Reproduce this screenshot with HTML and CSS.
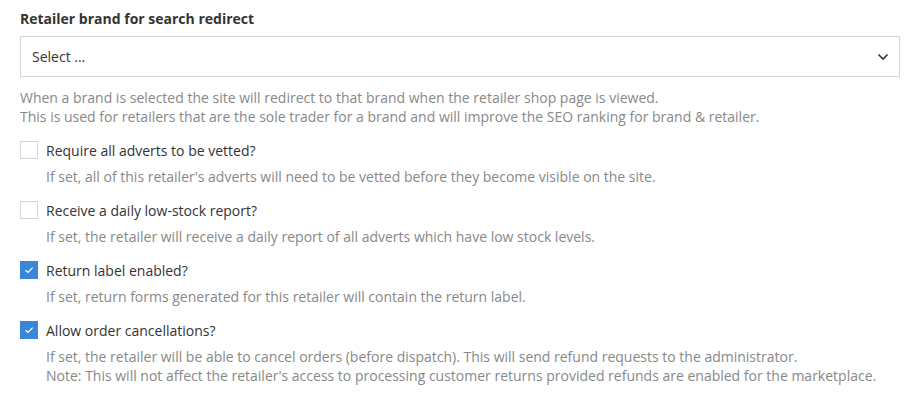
FILE: index.html
```html
<!DOCTYPE html>
<html lang="en">
<head>
    <meta charset="UTF-8">
    <title>Retailer settings</title>
    <link rel="stylesheet" href="styles.css">
</head>
<body>
    <div class="form-container">
        <div class="form-group">
            <label class="field-label" for="brand-select">Retailer brand for search redirect</label>
            <div class="select-box" id="brand-select">
                <span>Select ...</span>
                <svg class="chevron" width="12" height="8" viewBox="0 0 12 8"><path d="M1.5 1.5 L6 6 L10.5 1.5" fill="none" stroke="#333" stroke-width="1.6"/></svg>
            </div>
            <p class="help-text">When a brand is selected the site will redirect to that brand when the retailer shop page is viewed.<br>This is used for retailers that are the sole trader for a brand and will improve the SEO ranking for brand &amp; retailer.</p>
        </div>

        <div class="check-group">
            <label class="check-row"><span class="checkbox"></span>Require all adverts to be vetted?</label>
            <p class="help-text">If set, all of this retailer's adverts will need to be vetted before they become visible on the site.</p>
        </div>

        <div class="check-group">
            <label class="check-row"><span class="checkbox"></span>Receive a daily low-stock report?</label>
            <p class="help-text">If set, the retailer will receive a daily report of all adverts which have low stock levels.</p>
        </div>

        <div class="check-group">
            <label class="check-row"><span class="checkbox checked"><svg width="10" height="8" viewBox="0 0 10 8"><path d="M1.5 4.2 L4 6.4 L8.6 1.6" fill="none" stroke="#fff" stroke-width="1.2"/></svg></span>Return label enabled?</label>
            <p class="help-text">If set, return forms generated for this retailer will contain the return label.</p>
        </div>

        <div class="check-group">
            <label class="check-row"><span class="checkbox checked"><svg width="10" height="8" viewBox="0 0 10 8"><path d="M1.5 4.2 L4 6.4 L8.6 1.6" fill="none" stroke="#fff" stroke-width="1.2"/></svg></span>Allow order cancellations?</label>
            <p class="help-text">If set, the retailer will be able to cancel orders (before dispatch). This will send refund requests to the administrator.<br>Note: This will not affect the retailer's access to processing customer returns provided refunds are enabled for the marketplace.</p>
        </div>
    </div>
</body>
</html>
```

FILE: styles.css
```css
body {
    font-family: "Open Sans", Arial, sans-serif;
    font-size: 14px;
    color: #333333;
    margin: 0;
    padding: 0;
    background: #ffffff;
}
.form-container {
    padding: 9px 20px 0 20px;
}
.field-label {
    display: block;
    font-weight: 700;
    line-height: 20px;
    margin-bottom: 7px;
}
.select-box {
    display: flex;
    align-items: center;
    justify-content: space-between;
    height: 39px;
    border: 1px solid #d4d4d4;
    padding: 0 10px 0 11px;
}
.help-text {
    color: #888888;
    margin: 0;
    line-height: 19px;
}
.form-group .help-text {
    margin-top: 11px;
}
.check-group {
    margin-top: 14px;
}
.check-row {
    display: flex;
    align-items: center;
    line-height: 19px;
    height: 20px;
}
.checkbox {
    width: 16px;
    height: 16px;
    border: 1px solid #d4d4d4;
    margin-right: 8px;
    display: flex;
    align-items: center;
    justify-content: center;
    background: #ffffff;
}
.checkbox.checked {
    background: #3a87d9;
    border-color: #3a87d9;
}
.check-group .help-text {
    margin-top: 7px;
    padding-left: 26px;
}
```
